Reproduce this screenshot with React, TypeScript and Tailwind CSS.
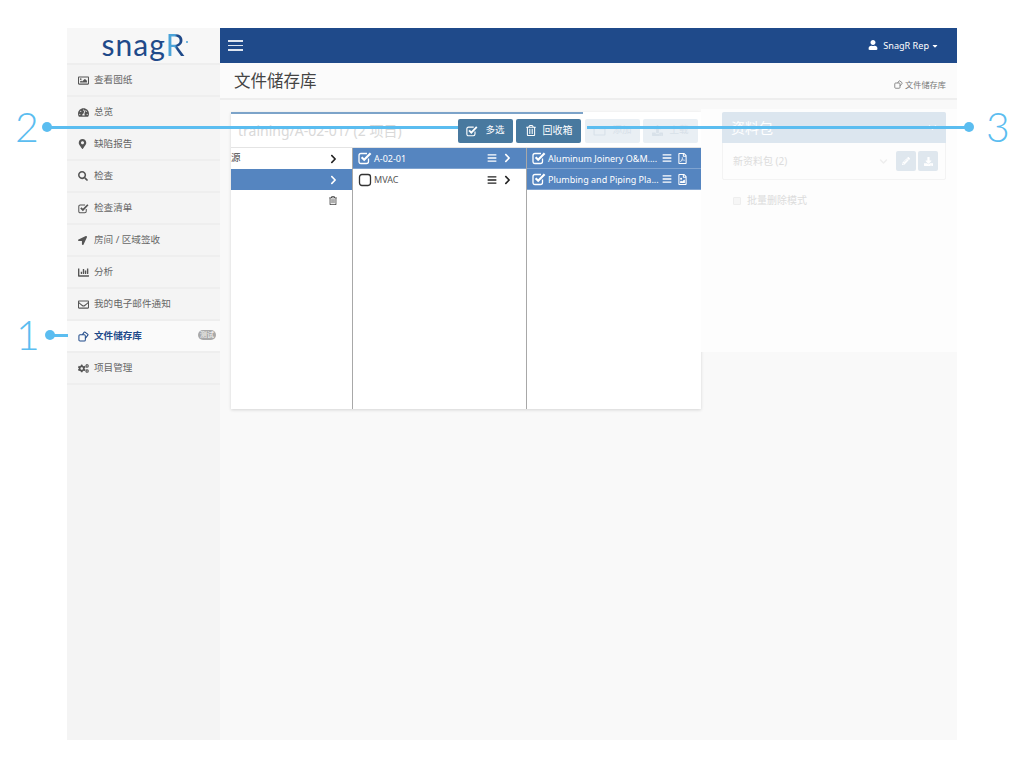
import React, { type FC, type ReactNode } from "react";
import {
  FaBars,
  FaCaretDown,
  FaChartBar,
  FaChevronDown,
  FaChevronRight,
  FaCogs,
  FaDownload,
  FaLocationArrow,
  FaMapMarkerAlt,
  FaPencilAlt,
  FaRegEnvelope,
  FaRegFileImage,
  FaRegFilePdf,
  FaRegFolder,
  FaRegImage,
  FaRegTrashAlt,
  FaSearch,
  FaTachometerAlt,
  FaUpload,
  FaUser,
} from "react-icons/fa";

const CopyIcon: FC<{ className?: string }> = ({ className }) => (
  <svg viewBox="0 0 12 12" fill="none" stroke="currentColor" strokeWidth="1.1" className={className}>
    <path d="M4.8 4 L6.8 1.2 Q7.2 .8 7.7 1.2 L10.8 3.6 Q11.2 4 10.8 4.5 L8 8" />
    <rect x="1" y="4" width="7" height="7" rx="1.2" />
  </svg>
);

const CheckedBox: FC<{ className?: string }> = ({ className }) => (
  <svg viewBox="0 0 14 14" fill="none" stroke="currentColor" className={className}>
    <path d="M10.5 7.5 V10.5 Q10.5 12.5 8.5 12.5 H3 Q1 12.5 1 10.5 V4.5 Q1 2.5 3 2.5 H9" strokeWidth="1.3" />
    <path d="M3.6 6.2 L6.2 8.8 L12.6 2.2" strokeWidth="2.2" />
  </svg>
);

const EmptyBox: FC<{ className?: string }> = ({ className }) => (
  <svg viewBox="0 0 14 14" fill="none" stroke="currentColor" strokeWidth="1.3" className={className}>
    <rect x="1.5" y="1.5" width="11" height="11" rx="2.4" />
  </svg>
);

type NavItem = { label: string; icon: ReactNode; active?: boolean; badge?: string };

const navItems: NavItem[] = [
  { label: "查看图纸", icon: <FaRegImage className="w-[11px] h-[11px]" /> },
  { label: "总览", icon: <FaTachometerAlt className="w-[11px] h-[11px]" /> },
  { label: "缺陷报告", icon: <FaMapMarkerAlt className="w-[9px] h-[10px]" /> },
  { label: "检查", icon: <FaSearch className="w-[10px] h-[10px]" /> },
  { label: "检查清单", icon: <CheckedBox className="w-[11px] h-[11px]" /> },
  { label: "房间 / 区域签收", icon: <FaLocationArrow className="w-[9px] h-[9px]" /> },
  { label: "分析", icon: <FaChartBar className="w-[11px] h-[11px]" /> },
  { label: "我的电子邮件通知", icon: <FaRegEnvelope className="w-[11px] h-[11px]" /> },
  { label: "文件储存库", icon: <CopyIcon className="w-[11px] h-[11px]" />, active: true, badge: "测试" },
  { label: "项目管理", icon: <FaCogs className="w-[11px] h-[11px]" /> },
];

const Sidebar: FC = () => (
  <aside className="w-[153px] shrink-0 bg-[#f4f4f4]">
    <div className="h-[35px] bg-[#f7f7f7] flex items-center justify-center">
      <span className="relative font-['Lato',sans-serif] text-[30px] leading-none text-[#1f4a8a] tracking-[1.1px] -mt-[3px]">
        snag
        <span className="bg-[linear-gradient(90deg,#4aa3d8_45%,#1f4a8a_55%)] bg-clip-text text-transparent">R</span>
        <span className="absolute right-[-2px] top-[12px] w-[2px] h-[2px] rounded-full bg-[#4aa3d8]" />
      </span>
    </div>
    {navItems.map((item) => (
      <div
        key={item.label}
        className={`h-[32px] flex items-center pl-[11px] pr-[4px] border-t-2 border-[#eeeeee] text-[9.6px] ${
          item.active ? "bg-[#fafafa] text-[#1f4a8a] font-bold" : "text-[#666666]"
        }`}
      >
        <span className={`w-[15px] flex justify-start ${item.active ? "text-[#1f4a8a]" : "text-[#555555]"}`}>{item.icon}</span>
        <span className="ml-[1px]">{item.label}</span>
        {item.badge && (
          <span className="ml-auto -mt-[3px] h-[10px] w-[18px] rounded-full bg-[#a9a9a9] text-white text-[7px] font-normal leading-[10px] text-center">
            {item.badge}
          </span>
        )}
      </div>
    ))}
    <div className="h-[2px] bg-[#eeeeee]" />
  </aside>
);

const Row: FC<{
  label?: string;
  selected?: boolean;
  checked?: boolean;
  trailing?: ReactNode;
}> = ({ label, selected, checked, trailing }) => (
  <div
    className={`h-[21px] flex items-center text-[9px] ${
      selected ? "bg-[#5585c0] text-white border-b border-[#7fa3d0]" : "text-[#555555]"
    }`}
  >
    <span className={`ml-[5px] w-[16px] shrink-0 ${selected ? "text-white" : "text-[#333333]"}`}>
      {checked ? <CheckedBox className="w-[14px] h-[14px]" /> : <EmptyBox className="w-[14px] h-[14px]" />}
    </span>
    <span className="whitespace-nowrap pt-[1px]">{label}</span>
    {trailing}
  </div>
);

const Menu: FC<{ selected?: boolean }> = ({ selected }) => (
  <FaBars className={`w-[10px] h-[10px] shrink-0 ${selected ? "text-white" : "text-[#222222]"}`} />
);

const Chevron: FC<{ selected?: boolean; className?: string }> = ({ selected, className }) => (
  <FaChevronRight className={`w-[9px] h-[10px] shrink-0 ${selected ? "text-white" : "text-[#222222]"} ${className ?? ""}`} />
);

const FileCard: FC = () => (
  <section className="w-[470px] h-[297px] mt-[3px] bg-white shadow-[0_1px_3px_rgba(0,0,0,0.15)] shrink-0">
    <div className="h-[2px] w-[352px] bg-[#7ca3c9]" />
    <div className="h-[34px] flex items-center pl-[7px] pr-[3px] border-b border-[#e4e4e4]">
      <span className="text-[14px] text-[#d9d9d9] whitespace-nowrap">training/A-02-01/ (2 项目)</span>
      <div className="ml-auto flex items-center gap-[3px]">
        <button className="w-[55px] h-[24px] rounded-[2px] bg-[#48799f] text-white text-[9.5px] flex items-center justify-center gap-[7px]">
          <CheckedBox className="w-[12px] h-[12px]" />
          多选
        </button>
        <button className="w-[65px] h-[24px] rounded-[2px] bg-[#48799f] text-white text-[10px] flex items-center justify-center gap-[7px] pl-[1px]">
          <FaRegTrashAlt className="w-[10px] h-[11px]" />
          回收箱
        </button>
        <button className="ml-[1px] w-[55px] h-[24px] rounded-[2px] bg-[#e9eff4] text-[#d8e1e9] text-[9.5px] flex items-center justify-center gap-[6px]">
          <FaRegFolder className="w-[13px] h-[12px]" />
          添加
        </button>
        <button className="w-[55px] h-[24px] rounded-[2px] bg-[#e9eff4] text-[#d8e1e9] text-[9.5px] flex items-center justify-center gap-[6px]">
          <FaUpload className="w-[11px] h-[11px]" />
          上载
        </button>
      </div>
    </div>
    <div className="flex h-[261px]">
      <div className="w-[122px] shrink-0 border-r border-[#a8a8a8] overflow-hidden">
        <div className="h-[21px] flex items-center pr-[14px] text-[9.5px] text-[#444444]">
          <span className="-ml-[9.5px] whitespace-nowrap">资源</span>
          <Chevron className="ml-auto" />
        </div>
        <div className="h-[21px] flex items-center pr-[14px] bg-[#5585c0]">
          <Chevron selected className="ml-auto" />
        </div>
        <div className="h-[21px] flex items-center justify-end pr-[15px] text-[#444444]">
          <FaRegTrashAlt className="w-[8px] h-[9px]" />
        </div>
      </div>
      <div className="w-[174px] shrink-0 border-r border-[#a8a8a8]">
        <Row
          label="A-02-01"
          selected
          checked
          trailing={
            <div className="ml-auto flex items-center gap-[6px] pr-[14px]">
              <Menu selected />
              <Chevron selected />
            </div>
          }
        />
        <Row
          label="MVAC"
          trailing={
            <div className="ml-auto flex items-center gap-[6px] pr-[14px]">
              <Menu />
              <Chevron />
            </div>
          }
        />
      </div>
      <div className="flex-1 min-w-0">
        <Row
          label="Aluminum Joinery O&M...."
          selected
          checked
          trailing={
            <div className="ml-auto shrink-0 flex items-center gap-[6px] pr-[14px]">
              <Menu selected />
              <FaRegFilePdf className="w-[9px] h-[11px] text-white" />
            </div>
          }
        />
        <Row
          label="Plumbing and Piping Pla..."
          selected
          checked
          trailing={
            <div className="ml-auto shrink-0 flex items-center gap-[6px] pr-[14px]">
              <Menu selected />
              <FaRegFileImage className="w-[9px] h-[11px] text-white" />
            </div>
          }
        />
      </div>
    </div>
  </section>
);

const PackagePanel: FC = () => (
  <section className="w-[256px] h-[243px] bg-[#fdfdfd] shrink-0 pt-[3px] pl-[21px] pr-[11px]">
    <div className="rounded-[2px] border border-[#f3f3f3] h-[68px]">
      <div className="h-[31px] -mx-px -mt-px rounded-t-[2px] bg-[#dce6ef] flex items-center px-[9px] text-white">
        <span className="text-[14px]">资料包</span>
        <FaChevronDown className="ml-auto w-[9px] h-[9px]" />
      </div>
      <div className="h-[36px] flex items-center pl-[10px] pr-[7px]">
        <span className="text-[10px] text-[#dcdcdc]">新资料包 (2)</span>
        <FaChevronDown className="ml-auto w-[9px] h-[9px] text-[#eeeeee]" />
        <span className="ml-[8px] w-[20px] h-[20px] rounded-[2px] bg-[#dfe7ee] flex items-center justify-center text-white">
          <FaPencilAlt className="w-[8px] h-[8px]" />
        </span>
        <span className="ml-[2px] w-[20px] h-[20px] rounded-[2px] bg-[#dfe7ee] flex items-center justify-center text-white">
          <FaDownload className="w-[9px] h-[9px]" />
        </span>
      </div>
    </div>
    <div className="mt-[13px] ml-[11px] flex items-center gap-[6px] text-[10px] text-[#dcdcdc]">
      <span className="w-[8px] h-[8px] rounded-[1px] border border-[#eeeeee] bg-[#f6f6f6]" />
      批量删除模式
    </div>
  </section>
);

const Marker: FC<{ className: string; lineClassName: string; dotClassName: string }> = ({ className, lineClassName, dotClassName }) => (
  <div className={`absolute ${className}`}>
    <div className={`absolute top-[-1.5px] h-[3px] bg-[#5bbdf0] ${lineClassName}`} />
    <div className={`absolute top-[-5px] w-[10px] h-[10px] rounded-full bg-[#5bbdf0] ${dotClassName}`} />
  </div>
);

export default function App() {
  return (
    <div className="relative w-[1024px] h-[768px] overflow-hidden bg-white pt-[28px] pl-[67px] font-['Noto_Sans','Noto_Sans_CJK_SC',sans-serif]">
      <div className="w-[890px] h-[712px] flex">
        <Sidebar />
        <main className="flex-1 min-w-0 flex flex-col bg-[#f9f9f9]">
          <header className="h-[35px] shrink-0 bg-[#1f4a8a] flex items-center pl-[8px] pr-[18px] text-white">
            <span className="flex flex-col gap-[3px]">
              <span className="block w-[15px] h-[1.5px] bg-[#dfe6f0]" />
              <span className="block w-[15px] h-[1.5px] bg-[#dfe6f0]" />
              <span className="block w-[15px] h-[1.5px] bg-[#dfe6f0]" />
            </span>
            <div className="ml-auto flex items-center text-[9.1px] pt-[1px]">
              <FaUser className="w-[10px] h-[10px] mr-[5px] -mt-[2px]" />
              SnagR Rep
              <FaCaretDown className="ml-[2px] w-[8px] h-[8px]" />
            </div>
          </header>
          <div className="h-[37px] shrink-0 bg-[#fbfbfb] border-b-2 border-[#eeeeee] flex items-center pl-[14px] pr-[11px]">
            <h1 className="text-[16.5px] text-[#444444] pt-[1px]">文件储存库</h1>
            <div className="ml-auto flex items-center gap-[2px] text-[8.2px] text-[#777777] pt-[9px]">
              <CopyIcon className="w-[9px] h-[9px]" />
              文件储存库
            </div>
          </div>
          <div className="flex-1 flex items-start pl-[11px] pt-[9px]">
            <FileCard />
            <PackagePanel />
          </div>
        </main>
      </div>

      <Marker className="left-0 top-[335px]" lineClassName="left-[48px] w-[20px]" dotClassName="left-[45px]" />
      <Marker className="left-0 top-[127px]" lineClassName="left-[47px] w-[411px]" dotClassName="left-[42px]" />
      <Marker className="left-0 top-[127px]" lineClassName="left-[587px] w-[380px]" dotClassName="left-[964px]" />
      <span className="absolute left-[15px] top-[105px] font-['Lato',sans-serif] font-light text-[41px] leading-[44px] text-[#5bbdf0]">2</span>
      <span className="absolute left-[16px] top-[313px] font-['Lato',sans-serif] font-light text-[41px] leading-[44px] text-[#5bbdf0]">1</span>
      <span className="absolute left-[986px] top-[105px] font-['Lato',sans-serif] font-light text-[41px] leading-[44px] text-[#5bbdf0]">3</span>
    </div>
  );
}
